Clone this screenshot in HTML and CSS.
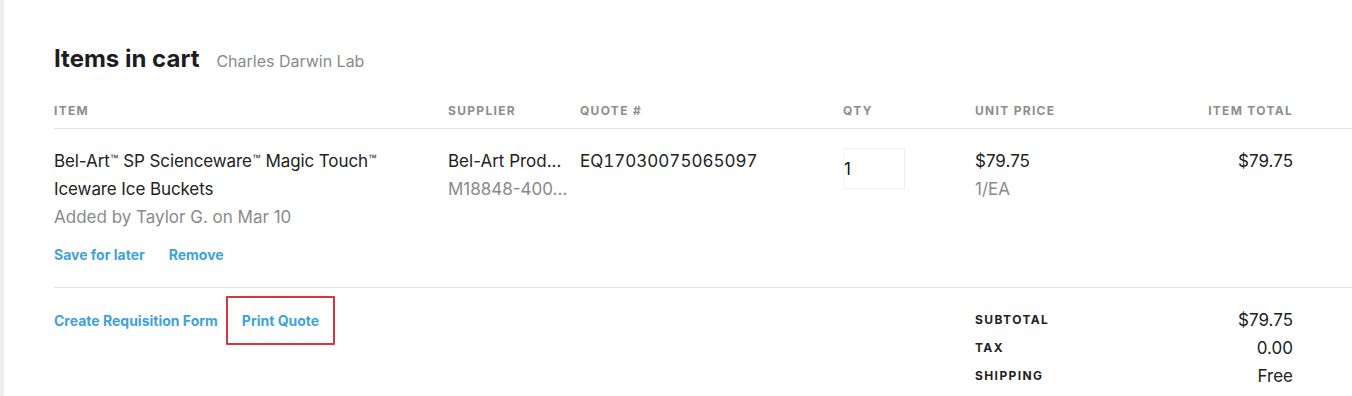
FILE: index.html
```
<!DOCTYPE html>
<html>
<head>
<meta charset="utf-8">
<link rel="stylesheet" href="styles.css">
</head>
<body>
<div class="page">
  <div class="cart">
    <div class="cart-head">
      <h1 class="title">Items in cart</h1>
      <span class="lab">Charles Darwin Lab</span>
    </div>
    <div class="row head">
      <div class="th">Item</div>
      <div class="th">Supplier</div>
      <div class="th">Quote #</div>
      <div class="th">Qty</div>
      <div class="th">Unit Price</div>
      <div class="th right">Item Total</div>
    </div>
    <div class="row item">
      <div class="cell">
        <div class="name">Bel-Art<sup>™</sup> SP Scienceware<sup>™</sup> Magic Touch<sup>™</sup><br>Iceware Ice Buckets</div>
        <div class="muted">Added by Taylor G. on Mar 10</div>
        <div class="links">
          <a class="link">Save for later</a>
          <a class="link">Remove</a>
        </div>
      </div>
      <div class="cell">
        <div class="ellip">Bel-Art Prod...</div>
        <div class="muted">M18848-400...</div>
      </div>
      <div class="cell quote">EQ17030075065097</div>
      <div class="cell"><div class="qty">1</div></div>
      <div class="cell">
        <div>$79.75</div>
        <div class="muted">1/EA</div>
      </div>
      <div class="cell right">$79.75</div>
    </div>
    <div class="row foot">
      <div class="actions">
        <a class="link">Create Requisition Form</a>
        <a class="link print">Print Quote</a>
      </div>
      <div class="summary">
        <div class="sl">Subtotal</div><div class="sv">$79.75</div>
        <div class="sl">Tax</div><div class="sv">0.00</div>
        <div class="sl">Shipping</div><div class="sv">Free</div>
      </div>
    </div>
  </div>
</div>
</body>
</html>
```
FILE: styles.css
```
html, body {
  margin: 0;
  padding: 0;
  background: #fff;
}
body {
  font-family: Inter, "Liberation Sans", sans-serif;
  color: #222;
  font-size: 17px;
}
.page {
  border-left: 4px solid #eeeeee;
  min-height: 396px;
  box-sizing: border-box;
}
.cart {
  margin-left: 50px;
}
.cart-head {
  display: flex;
  align-items: baseline;
  gap: 17px;
  padding-top: 43px;
  height: 32px;
}
.title {
  margin: 0;
  font-size: 24px;
  line-height: 32px;
  font-weight: 700;
  color: #1d1d1f;
}
.lab {
  font-size: 16px;
  color: #8a8a8a;
}
.row {
  display: grid;
  grid-template-columns: 394px 132px 263px 132px 1fr 160px;
  padding-right: 59px;
  border-bottom: 1px solid #e4e4e4;
}
.head {
  padding-top: 28px;
  padding-bottom: 9px;
}
.th {
  font-size: 12px;
  line-height: 16px;
  font-weight: 700;
  letter-spacing: 1.3px;
  text-transform: uppercase;
  color: #8e8e8e;
}
.right {
  text-align: right;
}
.item {
  padding-top: 18px;
  padding-bottom: 22px;
  line-height: 28px;
}
.name {
  letter-spacing: -0.1px;
}
.name sup {
  font-family: "Liberation Sans", sans-serif;
  font-size: 9px;
  vertical-align: 6px;
  line-height: 0;
}
.quote {
  font-variant-numeric: tabular-nums;
}
.muted {
  color: #8a8a8a;
}
.links {
  display: flex;
  gap: 24px;
  margin-top: 14px;
  line-height: 20px;
}
.link {
  font-size: 14px;
  font-weight: 700;
  color: #3fa2dd;
  cursor: pointer;
}
.qty {
  width: 62px;
  height: 41px;
  box-sizing: border-box;
  border: 1px solid #eeeeee;
  border-left-color: #f6f6f6;
  margin-top: 1px;
  line-height: 40px;
  font-size: 17px;
  color: #111;
}
.foot {
  border-bottom: none;
}
.actions {
  grid-column: 1 / 5;
  display: flex;
  align-items: center;
  align-self: start;
  gap: 8px;
  padding-top: 8px;
}
.print {
  display: inline-flex;
  align-items: center;
  height: 49px;
  box-sizing: border-box;
  padding: 0 14px;
  border: 2px solid #d8363e;
  border-radius: 1px;
}
.summary {
  grid-column: 5 / 7;
  display: grid;
  grid-template-columns: 1fr auto;
  padding-top: 18px;
  line-height: 28px;
}
.sl {
  font-size: 12px;
  font-weight: 700;
  letter-spacing: 1.4px;
  text-transform: uppercase;
  color: #222;
}
.sv {
  text-align: right;
}
```
